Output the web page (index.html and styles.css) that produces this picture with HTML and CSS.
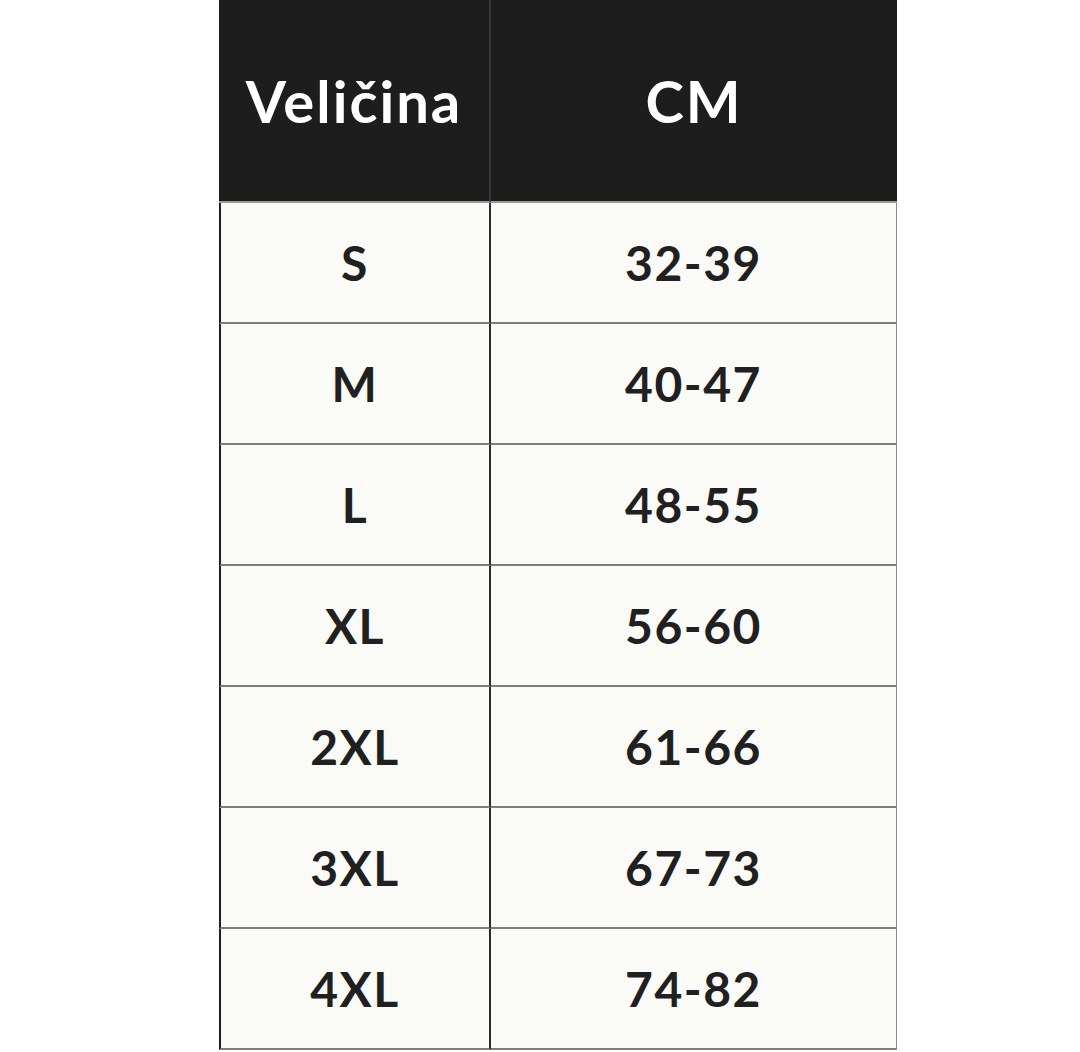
FILE: index.html
```html
<!DOCTYPE html>
<html lang="hr">
<head>
<meta charset="utf-8">
<title>Tablica veličina</title>
<link rel="stylesheet" href="styles.css">
</head>
<body>
<div class="chart">
  <div class="head first">Veličina</div>
  <div class="head last">CM</div>
  <div class="cell first">S</div><div class="cell last">32-39</div>
  <div class="cell first">M</div><div class="cell last">40-47</div>
  <div class="cell first">L</div><div class="cell last">48-55</div>
  <div class="cell first">XL</div><div class="cell last">56-60</div>
  <div class="cell first">2XL</div><div class="cell last">61-66</div>
  <div class="cell first">3XL</div><div class="cell last">67-73</div>
  <div class="cell first">4XL</div><div class="cell last">74-82</div>
</div>
</body>
</html>
```
FILE: styles.css
```css
html, body {
  margin: 0;
  padding: 0;
  background: #ffffff;
}
body {
  font-family: "Lato", "Open Sans", sans-serif;
}
.chart {
  margin-left: 219px;
  width: 678px;
  display: grid;
  grid-template-columns: 272px 406px;
  grid-template-rows: 203px repeat(7, 121px);
}
.head {
  background: #1d1d1d;
  color: #ffffff;
  font-weight: 700;
  font-size: 58px;
  display: flex;
  align-items: center;
  justify-content: center;
  border-bottom: 2px solid #9a9a98;
  letter-spacing: 2px;
}
.head.first {
  border-right: 2px solid #3a3a3a;
}
.cell {
  background: #fafaf6;
  color: #202020;
  font-weight: 700;
  font-size: 48px;
  display: flex;
  align-items: center;
  justify-content: center;
  border-bottom: 2px solid #7d7d7b;
  letter-spacing: 1.5px;
}
.cell.first {
  border-left: 2px solid #1e1e1e;
  border-right: 2px solid #2a2a2a;
}
.cell.last {
  border-right: 1px solid #8a8a88;
}
```
